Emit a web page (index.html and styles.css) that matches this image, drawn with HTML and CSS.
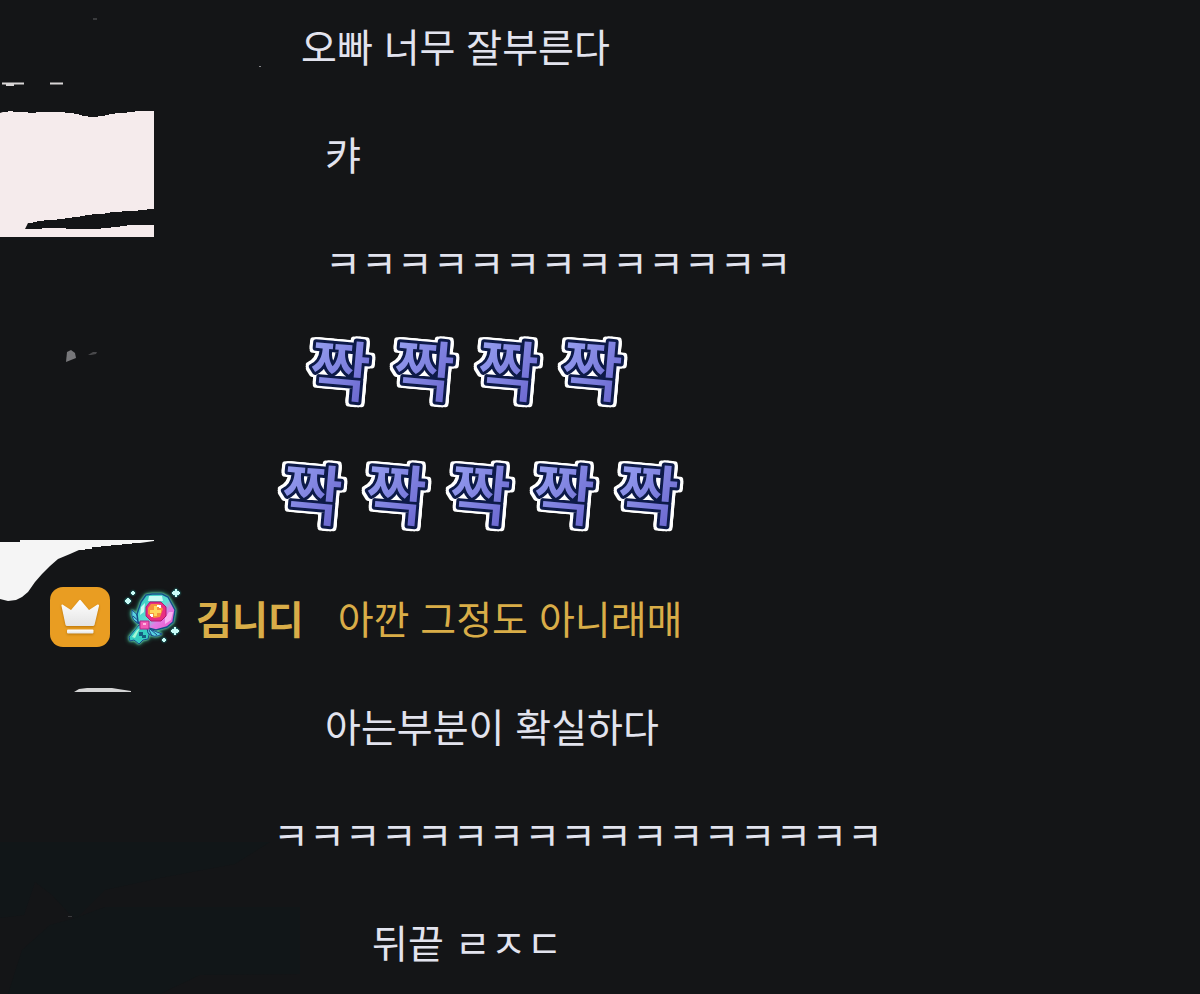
FILE: index.html
```html
<!doctype html>
<html lang="ko">
<head>
    <meta charset="UTF-8">
    <meta name="viewport" content="width=device-width, initial-scale=1.0">
    <title>채팅</title>
    <link rel="stylesheet" href="styles.css">
</head>
<body>
    <div class="chat">
        <!--왼쪽 배경 조각-->
        <svg class="scraps" width="310" height="994" viewBox="0 0 310 994" aria-hidden="true">
            <path fill="#111618" d="M0 842H270L235 864L160 878L105 890L75 920L52 895L35 882L24 915L0 918Z"/>
            <path fill="#111618" d="M105 907H300V974L200 975L160 994H8L22 950L50 925L75 918Z"/>
            <path fill="#d8d5d6" d="M2 82.500H24V84.500H14V86H6V84.500H2ZM50 82.500H63V84.500H50Z"/>
            <path fill="#f5ebec" d="M0 113L3 112H8V111H13V112H28V113H36V112H65V113H74V114H79V115H82V116H88V117H98V116H105V115H109V114H115V113H127V112H135V111H154V209H147V210H138V211H122V212H110V213H105V214H92V215H85V216H80V217H72V218H65V219H57V220H44V221H37V222H33V223H28L25 229H42V228H66V229H101V228H111V227H120V226H127V225H154V237H0Z"/>
            <path fill="#f5f5f5" d="M0 542H20V540H154V541L140 543H132V544H122V545H111V546H101V547H92V549H85V550H79L70 554L58 559L50 566L42 574L35 582L28 592L22 597L16 600L8 601L0 599Z"/>
            <path fill="#d4d4d5" d="M74 692L79 689L87 688H112L118 689L131 691V692Z"/>
            <path fill="#77777a" d="M66 362L67 352L71 350L75 353L76 358L71 360Z"/>
            <path fill="#48484b" d="M88 355L93 352H97L96 354L91 355Z"/>
            <path fill="#88888b" d="M259 66H261V67H259Z"/>
            <path fill="#3a3b3d" d="M93 18H97V20H93ZM68 916H72V917H68Z"/>
        </svg>

        <ul class="list">
            <li class="row indent-m"><span class="msg">오빠 너무 잘부른다</span></li>
            <li class="row indent-l"><span class="msg">캬</span></li>
            <li class="row indent-l"><span class="msg">ㅋㅋㅋㅋㅋㅋㅋㅋㅋㅋㅋㅋㅋ</span></li>
            <li class="row emotes indent-m">
                <svg class="emote" viewBox="0 0 76 80">
                    <defs>
                        <linearGradient id="clap" x1="0" y1="0" x2="1" y2="1">
                            <stop offset=".1" stop-color="#98a2f2"/>
                            <stop offset=".9" stop-color="#6a66cf"/>
                        </linearGradient>
                    </defs>
                    <text x="39" y="66" transform="rotate(5 38 40)">짝</text>
                </svg>
                <svg class="emote" viewBox="0 0 76 80"><text x="39" y="66" transform="rotate(5 38 40)">짝</text></svg>
                <svg class="emote" viewBox="0 0 76 80"><text x="39" y="66" transform="rotate(5 38 40)">짝</text></svg>
                <svg class="emote" viewBox="0 0 76 80"><text x="39" y="66" transform="rotate(5 38 40)">짝</text></svg>
            </li>
            <li class="row emotes indent-s">
                <svg class="emote" viewBox="0 0 76 80"><text x="39" y="66" transform="rotate(5 38 40)">짝</text></svg>
                <svg class="emote" viewBox="0 0 76 80"><text x="39" y="66" transform="rotate(5 38 40)">짝</text></svg>
                <svg class="emote" viewBox="0 0 76 80"><text x="39" y="66" transform="rotate(5 38 40)">짝</text></svg>
                <svg class="emote" viewBox="0 0 76 80"><text x="39" y="66" transform="rotate(5 38 40)">짝</text></svg>
                <svg class="emote" viewBox="0 0 76 80"><text x="39" y="66" transform="rotate(5 38 40)">짝</text></svg>
            </li>
            <li class="row host">
                <svg class="badge" viewBox="0 0 60 60" role="img" aria-label="방장">
                    <defs>
                        <linearGradient id="crown" x1="0" y1="0" x2="0" y2="1">
                            <stop offset="0" stop-color="#fff"/>
                            <stop offset="1" stop-color="#e4e4e4"/>
                        </linearGradient>
                    </defs>
                    <rect width="60" height="60" rx="13" fill="#e99d22"/>
                    <g class="crown" fill="url(#crown)">
                        <path d="M12.500 17.500L21 23L29 13.500Q30 12 31 13.500L39 23L47.500 17.500Q49.500 17 49 19L44.500 38Q44 39 43 39H17Q16 39 15.500 38L11.500 19Q11 17 12.500 17.500Z"/>
                        <rect x="17" y="42.500" width="26.500" height="4" rx="1"/>
                    </g>
                </svg>
                <svg class="badge" viewBox="0 0 60 60" role="img" aria-label="열쇠">
                    <defs>
                        <linearGradient id="frame" x1="0" y1="0" x2="1" y2="1">
                            <stop offset="0" stop-color="#2cc7bd"/>
                            <stop offset=".5" stop-color="#62e0d6"/>
                            <stop offset=".65" stop-color="#e27be6"/>
                            <stop offset="1" stop-color="#f04fc4"/>
                        </linearGradient>
                    </defs>
                    <g class="glow">
                        <path fill="#35cdc0" stroke="#1a4a8a" d="M16 38L6 50L7 54L11 53L16 57L20 53L25 52L27 44L28 41Z"/>
                        <path fill="#155f82" d="M16 45H20V48H23V51H19V49H16Z"/>
                        <path fill="#a4f7d4" d="M14 43L17 41L12 51L9 50Z"/>
                        <path fill="#58d3e2" stroke="#1a4a8a" d="M18 38Q7 34 9 23Q14 26 16 32L20 37ZM24 41Q34 45 39 47Q31 52 25 46Z"/>
                        <path fill="none" stroke="#1a4a8a" d="M10 29L19 37M12 34L18 38M27 42L34 48M26 43L29 49"/>
                        <path fill="url(#frame)" stroke="#15508a" stroke-width="1.500" d="M23 8L29 7H39L45 10L52 23L50 35L44 40L33 43L25 41L15 35L14 27L18 15Z"/>
                        <path fill="#c8fbf5" d="M26 9H39L40 14H25ZM18 20L22 16L21 25L17 28Z"/>
                        <path fill="#f7b3f2" d="M46 25L50 25L48 33L42 37L42 31Z"/>
                        <path fill="#e92f82" stroke="#b01870" d="M27 15H38L43 20V29L38 34H28L23 29V20Z"/>
                        <path fill="#f7933d" d="M28 17H36L40 22L37 30L31 31L25 27V21Z"/>
                        <path fill="#ffd75d" d="M31 19H34V23H38V26H34V29H31V26H27V23H31Z"/>
                        <path fill="#fff" d="M34 18H38V21H36V20H34ZM27 27H30V30H28V29H27Z"/>
                        <path fill="#f05bb5" stroke="#b0268c" d="M17 34H26V42H17Z"/>
                        <path fill="#ffb5e0" d="M20 36H23V38H20Z"/>
                    </g>
                    <path class="spark" fill="#c9fcf7" d="M52 2H54V4H56V5H57V7H56V8H54V10H52V8H50V7H49V5H50V4H52ZM51 40H53V42H55V43H56V45H55V46H53V48H51V46H49V45H48V43H49V42H51ZM4 11H6V12H7V13H8V15H7V16H6V17H4V16H3V15H2V13H3V12H4ZM9 4H11V5H12V7H11V8H9V7H8V5H9ZM40 51H42V52H43V54H42V55H40V54H39V52H40Z"/>
                </svg>
                <strong class="name">김니디</strong>
                <span class="msg">아깐 그정도 아니래매</span>
            </li>
            <li class="row indent-l"><span class="msg">아는부분이 확실하다</span></li>
            <li class="row indent-s"><span class="msg">ㅋㅋㅋㅋㅋㅋㅋㅋㅋㅋㅋㅋㅋㅋㅋㅋㅋ</span></li>
            <li class="row indent-xl"><span class="msg">뒤끝 ㄹㅈㄷ</span></li>
        </ul>
    </div>
</body>
</html>
```
FILE: styles.css
```css
*{
    padding: 0;
    margin: 0;
    box-sizing: border-box;
}
body{
    background: #141517;
    color: #e2e3ee;
    font-family: "Noto Sans CJK KR", sans-serif;
    font-size: 39px;
    line-height: 80px;
}
.chat{
    position: relative;
    min-height: 100vh;
    overflow: hidden;
}
.scraps{
    position: absolute;
    left: 0;
    top: 0;
}
.list{
    position: relative;
    padding: 5px 0;
    list-style: none;
}
.row{
    display: flex;
    align-items: center;
    height: 80px;
    margin-bottom: 28px;
    white-space: nowrap;
}
.row:last-child{
    margin-bottom: 0;
}

/* 닉네임 길이만큼 들여쓰기 */
.indent-s{
    padding-left: 273px;
}
.indent-m{
    padding-left: 301px;
}
.indent-l{
    padding-left: 325px;
}
.indent-xl{
    padding-left: 372px;
}

/* 이모티콘 */
.emotes{
    gap: 8px;
    margin-bottom: 44px;
}
.emote{
    flex: none;
    width: 76px;
    height: 80px;
    overflow: visible;
    filter: drop-shadow(3px 0 0 #fff) drop-shadow(-3px 0 0 #fff) drop-shadow(0 2px 0 #fff) drop-shadow(0 -2px 0 #fff);
}
.emote text{
    text-anchor: middle;
    font-size: 66px;
    font-weight: 500;
    fill: url(#clap);
    stroke: #0d1a48;
    stroke-width: 6px;
    stroke-linejoin: round;
    paint-order: stroke fill;
}

/* 방장 */
.host{
    padding-left: 50px;
    color: #d9ad48;
}
.badge{
    flex: none;
    width: 60px;
    height: 60px;
    margin-right: 13px;
    overflow: visible;
}
.crown{
    filter: drop-shadow(0 1px 1px #b87508);
}
.glow{
    filter: drop-shadow(0 0 1px #7fe8b4) drop-shadow(0 0 2px #2fae8c);
}
.spark{
    filter: drop-shadow(0 0 1px #2bc5c2);
}
.name{
    margin-right: 34px;
    font-weight: 700;
}
```
